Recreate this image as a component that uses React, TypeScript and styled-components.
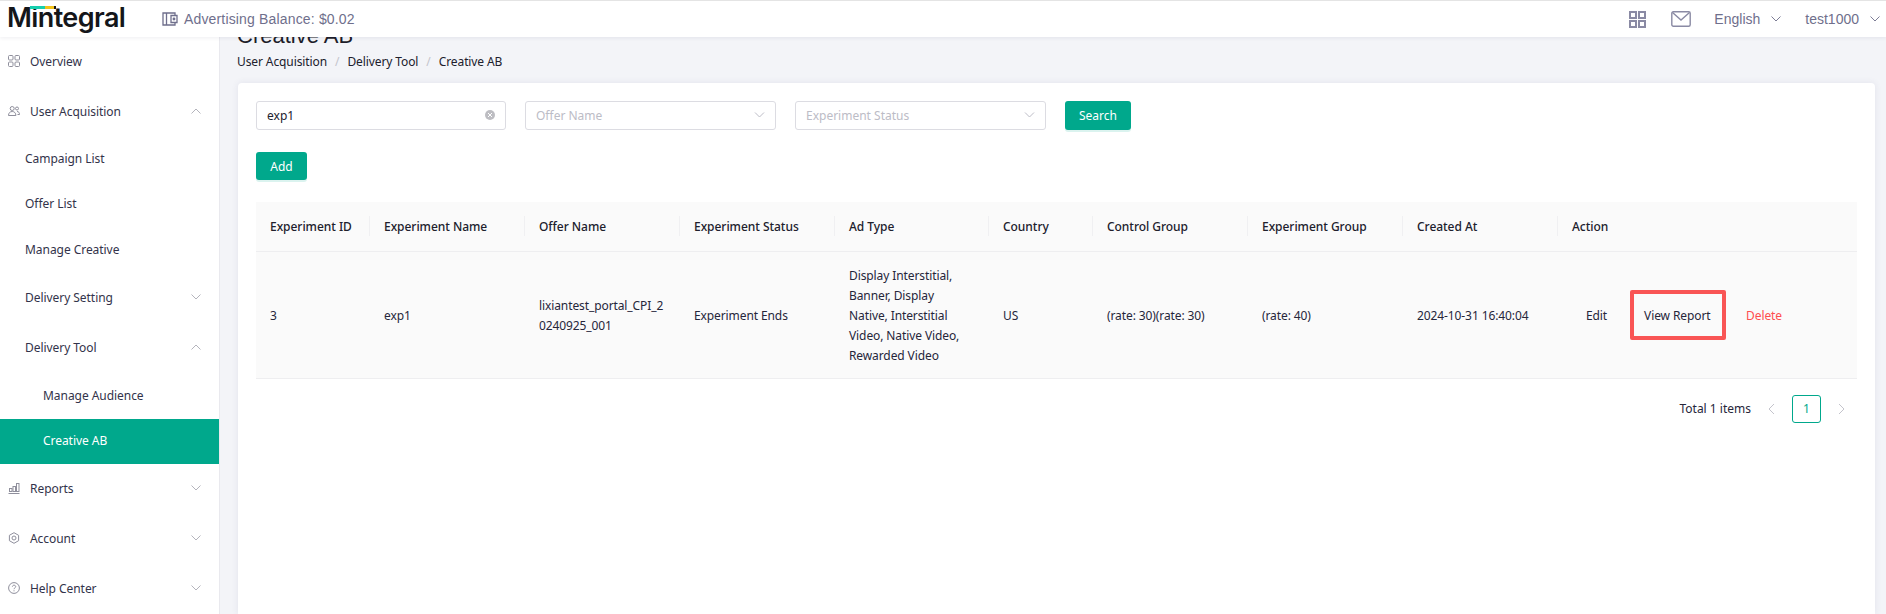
import React from "react";
import styled, { createGlobalStyle } from "styled-components";

const Global = createGlobalStyle`
  html, body { margin: 0; padding: 0; height: 100%; overflow: hidden; background: #f3f4f8; }
  #root { height: 100%; }
  * { box-sizing: border-box; }
`;

const Page = styled.div`
  width: 1886px; height: 614px; display: flex; flex-direction: column; overflow: hidden;
  font-family: "Noto Sans", "Liberation Sans", sans-serif; font-size: 12px; color: #2c2c3a;
`;
const TopBar = styled.header`
  position: relative; z-index: 2; height: 37px; flex: none; background: #fff;
  border-top: 1px solid #e4e4e4; box-shadow: 0 1px 4px rgba(40,40,80,.08);
  display: flex; align-items: center; padding: 0 6px 0 7px;
  font-family: "Liberation Sans", sans-serif; font-size: 14px; color: #6f6f8c;
`;
const Logo = styled.div`
  position: relative; width: 155px; flex: none; margin-top: -2px; font-family: Inter, sans-serif; font-weight: 600;
  font-size: 27px; letter-spacing: -.6px; color: #14161a; line-height: 30px;
`;
const LogoBar = styled.span`
  position: absolute; left: 23px; top: 3px; width: 26px; height: 3px;
  background: linear-gradient(90deg, #16cfae 0 58%, #f2c21a 58% 92%, #14161a 92%);
`;
const Balance = styled.div`display: flex; align-items: center; gap: 6px; flex: 1; letter-spacing: .16px;`;
const TopRight = styled.div`display: flex; align-items: center;`;
const TopIcon = styled.span<{ $mr: number }>`display: flex; margin-right: ${p => p.$mr}px;`;
const TopText = styled.span<{ $mr: number }>`display: flex; align-items: center; gap: 11px; margin-right: ${p => p.$mr}px;`;

const Body = styled.div`flex: 1; display: flex; min-height: 0;`;
const Sidebar = styled.nav`
  width: 220px; flex: none; background: #fff; border-right: 1px solid #e9e9ee;
  display: flex; flex-direction: column; font-size: 12px; letter-spacing: -.05px;
`;
const NavItem = styled.div<{ $h: number; $indent: number; $active?: boolean }>`
  height: ${p => p.$h}px; flex: none; display: flex; align-items: center; gap: 10px;
  padding: 0 18px 2px ${p => p.$indent}px;
  background: ${p => (p.$active ? "#00a88c" : "transparent")};
  color: ${p => (p.$active ? "#fff" : "#33334a")};
`;
const NavLabel = styled.span`flex: 1;`;

const Main = styled.main`
  flex: 1; min-width: 0; padding: 0 11px 0 18px; display: flex; flex-direction: column; overflow: hidden;
`;
const Title = styled.h1`
  margin: -14px 0 0 -1px; font: 400 22px/26px "Liberation Sans", sans-serif; color: #1d1d2a; flex: none;
`;
const Crumbs = styled.div`
  margin: 2px 0 0 -1px; height: 20px; display: flex; align-items: center; gap: 8px; flex: none; color: #20202c; letter-spacing: -.1px;
`;
const Sep = styled.span`color: #c4c4cc;`;
const Card = styled.section`
  margin-top: 12px; flex: 1; background: #fff; border-radius: 4px 4px 0 0;
  box-shadow: 0 0 7px rgba(60,60,110,.09); padding: 18px;
`;
const FilterRow = styled.div`display: flex; align-items: center; gap: 19px; height: 29px;`;
const Field = styled.div<{ $ph?: boolean }>`
  width: ${p => (p.$ph ? "251px" : "250px")}; height: 29px; border: 1px solid #dcdce2; border-radius: 3px;
  display: flex; align-items: center; justify-content: space-between; padding: 0 10px 1px;
  color: ${p => (p.$ph ? "#bcbcc6" : "#22222e")};
`;
const ClearIcon = styled.span`
  width: 10px; height: 10px; border-radius: 50%; background: #bdbdc2; color: #fff;
  display: flex; align-items: center; justify-content: center;
`;
const Button = styled.button<{ $w: number; $h: number }>`
  width: ${p => p.$w}px; height: ${p => p.$h}px; border: 0; border-radius: 3px; background: #00a88c; color: #fff;
  font: inherit; padding: 0; box-shadow: 0 2px 0 rgba(0,168,140,.14);
`;
const AddRow = styled.div`margin-top: 22px; height: 28px; display: flex;`;
const Table = styled.table`
  margin-top: 22px; width: 1601px; border-collapse: collapse; table-layout: fixed;
`;
const Th = styled.th`
  position: relative; height: 49px; padding: 0 14px; text-align: left; font-weight: 500; background: #fafafa;
  border-bottom: 1px solid #eeeef0; color: #20202c; letter-spacing: -.04px;
  &:not(:last-child)::after {
    content: ""; position: absolute; right: 0; top: 14px; height: 20px; width: 1px; background: #f0f0f2;
  }
`;
const Td = styled.td`
  padding: 14px 14px 12px; height: 127px; line-height: 20px; background: #fafafa; border-bottom: 1px solid #eeeef0;
  color: #26263a; word-break: break-word; vertical-align: middle; letter-spacing: -.1px;
`;
const Actions = styled.div`display: flex; align-items: center; padding-left: 14px; margin-top: -2px;`;
const ActionBtn = styled.span<{ $tone?: "danger"; $marked?: boolean }>`
  position: relative; display: block; padding: 0; margin-right: ${p => (p.$marked ? 20 : 23)}px;
  line-height: 52px; height: 50px;
  color: ${p => (p.$tone === "danger" ? "#ff4d4f" : "#26263a")};
  ${p => p.$marked && "border: 4px solid #f95555; border-radius: 2px; line-height: 44px; padding: 0 10px; width: 96px; white-space: nowrap;"}
`;
const Pager = styled.div`
  display: flex; justify-content: flex-end; align-items: center; margin-top: 16px; width: 1601px; height: 28px; padding-right: 12px;
`;
const PagerText = styled.span`margin-right: 17px; color: #26263a;`;
const PagerBox = styled.span`
  width: 29px; height: 28px; margin: 0 17px; border: 1px solid #00a88c; border-radius: 3px; color: #00a88c;
  display: flex; align-items: center; justify-content: center;
`;

const Chevron = ({ up, color = "#9d9da8", size = 10 }: { up?: boolean; color?: string; size?: number }) => (
  <svg width={size} height={6} viewBox="0 0 10 6" fill="none" stroke={color} strokeWidth="1">
    <path d={up ? "M.5 5.5 5 1l4.5 4.5" : "M.5.5 5 5 9.5.5"} />
  </svg>
);
const ic = { width: 12, height: 12, viewBox: "0 0 12 12", fill: "none", stroke: "#8f8f9c", strokeWidth: 1 };
const GridSmall = () => (
  <svg {...ic}><rect x=".5" y=".5" width="4.5" height="4.5" rx="1"/><rect x="7" y=".5" width="4.5" height="4.5" rx="1"/><rect x=".5" y="7" width="4.5" height="4.5" rx="1"/><rect x="7" y="7" width="4.5" height="4.5" rx="1"/></svg>
);
const Users = () => (
  <svg {...ic}><circle cx="4.2" cy="3.5" r="2"/><path d="M.5 10.500c0-2.500 1.500-4 3.700-4s3.700 1.500 3.700 4z"/><circle cx="9" cy="3.500" r="1.500"/><path d="M9 6.500c1.500 0 2.500 1 2.500 3h-2"/></svg>
);
const Bars = () => (
  <svg {...ic}><path d="M.5 11.500h11"/><rect x="1.500" y="6.500" width="2.500" height="3"/><rect x="5" y="4.500" width="2.500" height="5"/><rect x="8.500" y="1.500" width="2.500" height="8"/></svg>
);
const Gear = () => (
  <svg {...ic}><path d="M6 .7 10.600 3.300v5.400L6 11.300 1.400 8.700V3.300z"/><circle cx="6" cy="6" r="2"/></svg>
);
const Help = () => (
  <svg {...ic}><circle cx="6" cy="6" r="5.400"/><path d="M4.400 4.700C4.500 3.700 5.200 3.200 6 3.200c1 0 1.700.6 1.700 1.400 0 1.300-1.700 1.300-1.700 2.600"/><path d="M6 8.300v1"/></svg>
);
const Wallet = () => (
  <svg width="16" height="14" viewBox="0 0 16 14" fill="none" stroke="#6f6f8c" strokeWidth="1.300">
    <path d="M13 3.500V1H1v12h12v-2.500"/><path d="M4.500 1v12"/><path d="M15 3.500H9v7h6z"/><circle cx="12" cy="7" r=".8"/>
  </svg>
);
const GridBig = () => (
  <svg width="17" height="17" viewBox="0 0 17 17" fill="none" stroke="#8a8aa4" strokeWidth="2">
    <rect x="1" y="1" width="6" height="6"/><rect x="10" y="1" width="6" height="6"/><rect x="1" y="10" width="6" height="6"/><rect x="10" y="10" width="6" height="6"/>
  </svg>
);
const Mail = () => (
  <svg width="20" height="16" viewBox="0 0 20 16" fill="none" stroke="#8a8aa4" strokeWidth="1.400">
    <rect x=".8" y=".8" width="18.400" height="14.400" rx="1.500"/><path d="M1.500 1.500 10 9l8.500-7.500"/>
  </svg>
);

const nav = [
  { label: "Overview", h: 50, indent: 8, icon: <GridSmall /> },
  { label: "User Acquisition", h: 50, indent: 8, icon: <Users />, chev: "up" },
  { label: "Campaign List", h: 45, indent: 25 },
  { label: "Offer List", h: 45, indent: 25 },
  { label: "Manage Creative", h: 46, indent: 25 },
  { label: "Delivery Setting", h: 50, indent: 25, chev: "down" },
  { label: "Delivery Tool", h: 50, indent: 25, chev: "up" },
  { label: "Manage Audience", h: 46, indent: 43 },
  { label: "Creative AB", h: 45, indent: 43, active: true },
  { label: "Reports", h: 50, indent: 8, icon: <Bars />, chev: "down" },
  { label: "Account", h: 50, indent: 8, icon: <Gear />, chev: "down" },
  { label: "Help Center", h: 50, indent: 8, icon: <Help />, chev: "down" },
];
const widths = [114, 155, 155, 155, 154, 104, 155, 155, 155, 299];
const heads = ["Experiment ID", "Experiment Name", "Offer Name", "Experiment Status", "Ad Type", "Country", "Control Group", "Experiment Group", "Created At", "Action"];

export default function App() {
  return (
    <Page>
      <Global />
      <TopBar>
        <Logo>Mintegral<LogoBar /></Logo>
        <Balance><Wallet />Advertising Balance: $0.02</Balance>
        <TopRight>
          <TopIcon $mr={25}><GridBig /></TopIcon>
          <TopIcon $mr={23}><Mail /></TopIcon>
          <TopText $mr={24}>English <Chevron color="#7d7d96" /></TopText>
          <TopText $mr={0}>test1000 <Chevron color="#7d7d96" /></TopText>
        </TopRight>
      </TopBar>
      <Body>
        <Sidebar>
          {nav.map(n => (
            <NavItem key={n.label} $h={n.h} $indent={n.indent} $active={n.active}>
              {n.icon}
              <NavLabel>{n.label}</NavLabel>
              {n.chev && <Chevron up={n.chev === "up"} color="#b4b4bc" />}
            </NavItem>
          ))}
        </Sidebar>
        <Main>
          <Title>Creative AB</Title>
          <Crumbs>
            <span>User Acquisition</span><Sep>/</Sep><span>Delivery Tool</span><Sep>/</Sep><span>Creative AB</span>
          </Crumbs>
          <Card>
            <FilterRow>
              <Field>exp1<ClearIcon><svg width="6" height="6" viewBox="0 0 6 6" stroke="#fff"><path d="M1 1l4 4M5 1 1 5" /></svg></ClearIcon></Field>
              <Field $ph>Offer Name<Chevron color="#bcbcc6" size={11} /></Field>
              <Field $ph>Experiment Status<Chevron color="#bcbcc6" size={11} /></Field>
              <Button $w={66} $h={29}>Search</Button>
            </FilterRow>
            <AddRow><Button $w={51} $h={28}>Add</Button></AddRow>
            <Table>
              <colgroup>{widths.map((w, i) => <col key={i} width={w} />)}</colgroup>
              <thead><tr>{heads.map(h => <Th key={h}>{h}</Th>)}</tr></thead>
              <tbody>
                <tr>
                  <Td>3</Td>
                  <Td>exp1</Td>
                  <Td>lixiantest_portal_CPI_20240925_001</Td>
                  <Td>Experiment Ends</Td>
                  <Td>Display Interstitial, Banner, Display Native, Interstitial Video, Native Video, Rewarded Video</Td>
                  <Td>US</Td>
                  <Td>(rate: 30)(rate: 30)</Td>
                  <Td>(rate: 40)</Td>
                  <Td>2024-10-31 16:40:04</Td>
                  <Td>
                    <Actions>
                      <ActionBtn>Edit</ActionBtn>
                      <ActionBtn $marked>View Report</ActionBtn>
                      <ActionBtn $tone="danger">Delete</ActionBtn>
                    </Actions>
                  </Td>
                </tr>
              </tbody>
            </Table>
            <Pager>
              <PagerText>Total 1 items</PagerText>
              <svg width="7" height="12" viewBox="0 0 7 12" fill="none" stroke="#c4c4cc"><path d="M6 1 1 6l5 5" /></svg>
              <PagerBox>1</PagerBox>
              <svg width="7" height="12" viewBox="0 0 7 12" fill="none" stroke="#c4c4cc"><path d="m1 1 5 5-5 5" /></svg>
            </Pager>
          </Card>
        </Main>
      </Body>
    </Page>
  );
}
